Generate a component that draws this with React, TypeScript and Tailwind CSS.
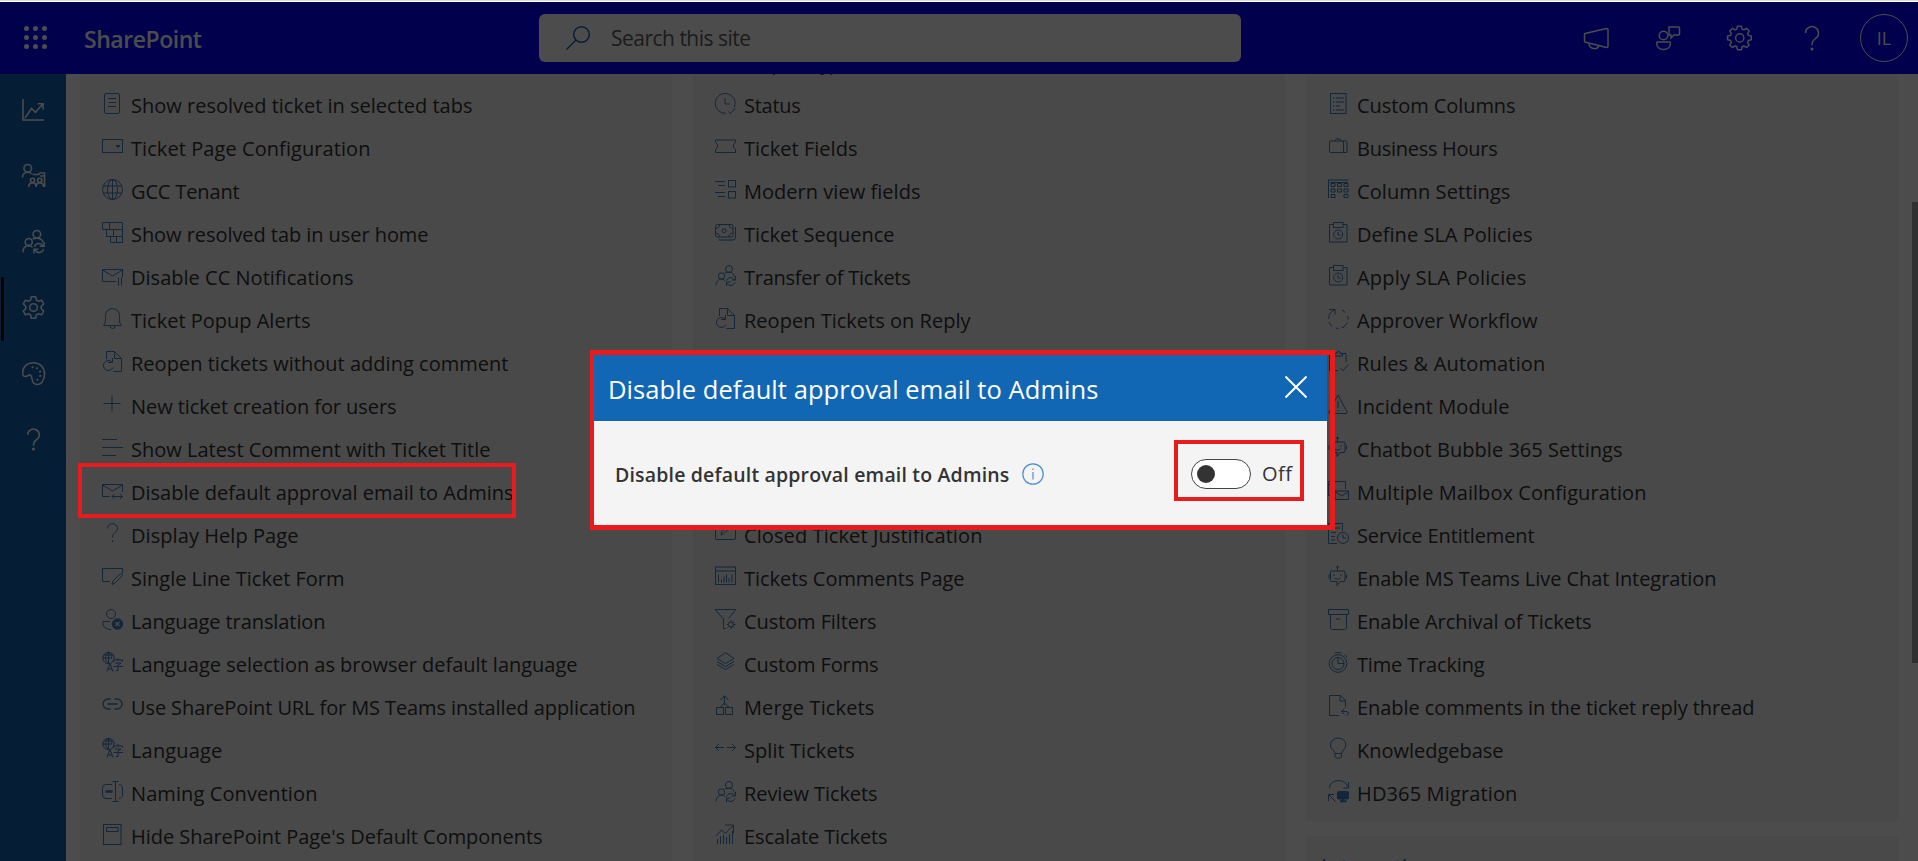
import { useLayoutEffect, useRef, useState, type ReactNode } from "react";

const icons: Record<string, ReactNode> = {
  doc: <><rect x="2.5" y=".5" width="15" height="20" rx="1.5" /><path d="M6 5.5h8M7 9.5h7M6 13.5h8" /></>,
  dropdown: <><rect x=".5" y="3.5" width="20" height="13" /><path d="M14 9.5h4l-2 2z" fill="currentColor" /></>,
  globe: <><circle cx="10.5" cy="10.5" r="10" /><ellipse cx="10.5" cy="10.5" rx="5" ry="10" /><path d="M10.5.5v20M1.3 7h18.4M1.3 14h18.4" /></>,
  tree: <><path d="M.5.5h20v20h-12v-6h-4v-7h-4z" /><path d="M4.5 7.5h16M8.5 14.5h12M7.5.5v7M11.5 7.5v7M14.5 14.5v6" /></>,
  mailPause: <><path d="M14 16.5H.5v-12h20V12M.5 5l10 6L20.500 5M16.500 12.500v8M19.500 12.500v8" /></>,
  bell: <><path d="M1.500 17.500c2-2 2-4 2-10a7 7 0 0 1 14 0c0 6 0 8 2 10zM8 18a2.500 2.500 0 0 0 5 0" /></>,
  reopen: <><path d="M4.500 8V.500h8l7 7v13h-8M12.500.500v7h7" /><path d="M10 11a5 5 0 1 0 1 5.500M10.500 7v4.500H6" /></>,
  plus: <path d="M10 1.500v16M1.500 9.500h17" />,
  lines: <path d="M0 2.500h15M0 10.500h21M0 18.500h14" />,
  mailArrows: <><path d="M7.500 16.500H.500v-12h20V12M.500 5l10 6L20.500 5M10 16.500h10.500M12.500 14L10 16.500l2.500 2.500M18 14l2.500 2.500L18 19" /></>,
  help: <><path d="M5.500 5.500a5 4.800 0 1 1 7.800 4c-2 1.400-2.800 2.500-2.800 5" /><circle cx="10.500" cy="18" r=".5" fill="currentColor" /></>,
  formPencil: <><path d="M8 15.500H.500v-13h20v5M11 15l7.500-7.500 2 2L13 17l-3 1.500z" /></>,
  personX: <><circle cx="9" cy="5" r="4.500" /><path d="M8 12.500H1c-1 5 3 8 8 8" /><circle cx="15.500" cy="15" r="5.200" fill="currentColor" /><path d="M13.500 13l4 4M17.500 13l-4 4" className="stroke-[#f4f4f4]" strokeWidth="1.4" /></>,
  lang: <><circle cx="6.500" cy="6" r="5.700" /><path d="M.8 6h9M6.500.300v11M2 3h9M6.500.300c-4 3-4 8 0 11M6.500.300c3 2 3.500 4 3.200 6M5 19.500l3-8 3 8M6 17h4" /><path d="M11.500 10V8h9v2M16 6v2M13 11h6l-3 2v5.500h-2M11.500 14.500h9.500" /></>,
  link: <path d="M8.500 4h-2.500a5 5 0 0 0 0 10h2.500M12.500 4H15a5 5 0 0 1 0 10h-2.500M5.500 9h10" strokeWidth="1.300" />,
  rename: <><path d="M10 3.500H4A3.500 3.500 0 0 0 .500 7v7A3.500 3.500 0 0 0 4 17.500h6M17 3.500c2 0 3.500 1.500 3.500 3.500v7c0 2-1.500 3.500-3.500 3.500M13.500.500v20M10.500.500h6M10.500 20.500h6" /><path d="M3.500 10.500h7" strokeWidth="2.500" /></>,
  template: <><rect x="1.500" y=".5" width="17.500" height="20" /><rect x="4.500" y="3.500" width="11.500" height="4" /></>,
  status: <><path d="M11 20.300A10 10 0 1 1 19.500 14M10 5v6h4.500M13.500 18.500l2 2 5-5.500" /></>,
  ticket: <path d="M.500 6.500V4h20v2.500a4 4 0 0 0 0 7V16.500H.500v-3a4 4 0 0 0 0-7z" />,
  fields: <><path d="M0 2.500h10M3 6.500h7M0 13.500h10M3 17.500h7" /><rect x="13.500" y="1.500" width="7" height="6.500" /><rect x="13.500" y="12.500" width="7" height="6.500" /></>,
  money: <><rect x=".5" y="2.500" width="17.500" height="12.500" rx="2" /><circle cx="9.200" cy="8.700" r="2" /><path d="M.500 6.500C3 6.500 4.500 5 4.500 2.500M14 2.500c0 2.500 1.500 4 4 4M.500 11c2.500 0 4 1.500 4 4M14 15c0-2.500 1.500-4 4-4M20.500 5v10a3 3 0 0 1-3 3H3.500" /></>,
  transfer: <><circle cx="14" cy="4" r="3.500" /><circle cx="6.500" cy="11" r="3.200" /><path d="M1 20.500c0-4 2.500-6.300 5.500-6.300 1.500 0 2.800.500 3.700 1.400M10 8c1-.500 2.500-.800 4-.800 3 0 5 2 5.500 4.500M11.500 15.500a4.500 4.500 0 0 1 8-1M20.500 11v4h-4M20 17.500a4.500 4.500 0 0 1-8 1M11.500 21v-4h4" /></>,
  edit: <><rect x=".5" y=".5" width="20" height="16" rx="1.500" /><path d="M6 12l1-3.500 7-7 2 2-7 7z" /></>,
  report: <><rect x=".5" y="1" width="20" height="17.500" /><path d="M.500 5h20M3.500 8.500v8M6.500 13.500v3M9 10.500v6M11.500 8.500v8M14 12v4.500M17 8.500v8" /></>,
  filter: <><path d="M8.500 19.500V10L.500 1V.500h20V1l-7 8.500M8.500 19.500h2.500" /><circle cx="16" cy="15.500" r="2.500" /><path d="M16 11v2M16 18v2M11.800 15.500h1.700M18.500 15.500h2M13 12.500l1.300 1.300M17.700 17.200l1.300 1.300M19 12.500l-1.300 1.300M14.300 17.200L13 18.500" /></>,
  layers: <><path d="M10.500.700L19 6.500l-8.500 5L2 6.500zM2 9.500l8.500 5 8.500-5M2 12.500l8.500 5 8.500-5" /></>,
  merge: <><path d="M9.500 10V.800M5.500 5l4-4.200 4 4.200M9.500 8l-4 4M9.500 8l4 4" /><rect x="1.500" y="12.500" width="7" height="7" /><rect x="10.500" y="12.500" width="7" height="7" /></>,
  split: <path d="M.500 9.500H9M4 6L.500 9.500 4 13M12 9.500h8.500M17 6l3.500 3.500L17 13" />,
  escalate: <path d="M1 12l5.500-6 4 3.500L18 1.500M10 1h8.500v8M2.500 15v5M5.500 12v8M8.500 11v9M11.500 13v7M14.500 10v10M17.500 7v13" />,
  list: <><rect x="2.500" y=".5" width="15.500" height="20" /><path d="M5 5h1.500M8 5h8M5 9h1.500M8 9h8M5 13h1.500M8 13h4M5 17h1.500M8 17h8" /></>,
  bag: <><rect x="1.500" y="5" width="17.500" height="11.500" rx="1" /><path d="M6.500 5c0-3 7-3 7 0M15.500 5v11.500" /></>,
  columns: <><path d="M.500 19V1h20M2 3.500h18" /><path d="M3 4.500h4v3H3zM9.500 4.500h4v3h-4zM16 4.500h4v3h-4zM3 10h4v3H3zM9.500 10h4v3h-4zM16 10h4v3h-4zM3 15.500h4v3H3zM16 15.500h4v3h-4z" /></>,
  sla: <><path d="M5 2.500H1.500v17.500h17.500V2.500H15" /><rect x="5.500" y=".5" width="9.500" height="5" /><circle cx="10.200" cy="12.500" r="4.500" /><path d="M10 10v3h2.500" /></>,
  cycle: <path d="M1 1.500h6v5M7 1.500A10 10 0 0 0 .700 11M1 14a10 10 0 0 0 3 4.500M8 20.300h3M13.500 18.500l1.500 1.500 4.500-5.500M20 11.500c0-1.500 0-2-.500-3.500M17.500 4.500L14 2" />,
  rules: <path d="M10 19.500H1.500V2.500H7M13 2.500h5V11M6.500 5V2.500h2a2 2 0 0 1 4 0h2V5zM12.500 17l2.500 2.500 5.500-6" />,
  warning: <><path d="M10 1L1 18c-.300 1 0 1.500 1 1.500h16c1 0 1.500-.500 1-1.500zM10 7v7M10 16v1.500" /></>,
  bot: <><path d="M3.500 5h12.500a1 1 0 0 1 1 1v8.500a1 1 0 0 1-1 1h-4L9 19.500v-4H3.500a1 1 0 0 1-1-1V6a1 1 0 0 1 1-1zM9.500 1v4M1 8.500v4M18.500 8.500v4M6 8.500v1.500M13 8.500v1.500M6.500 12c1.500 1.500 4.500 1.500 6 0" /><circle cx="9.500" cy="1" r=".8" fill="currentColor" /></>,
  mailbox: <><path d="M5 15.500H.500v-14h17V9M.500 5L8 1.500" /><rect x="7" y="11" width="13.500" height="8.500" /><path d="M7 11.500l6.700 4.500 6.800-4.500" /></>,
  entitlement: <><path d="M9 20.500H.500V.500h14V8M3 5h9M3 9.500h5M3 13.500h4M3 17h4" /><circle cx="15" cy="15" r="5.500" /><path d="M15 11.500V15h3" /></>,
  archive: <><path d="M.500.500h20v5H.500zM2.500 5.500V18c0 1.500.500 2.500 2 2.500h12c1.500 0 2-1 2-2.500V5.500M8 10h4.500" /></>,
  timer: <><circle cx="10" cy="11.500" r="8.800" /><circle cx="10" cy="11.500" r="6" /><path d="M7 .700h6.500M16.500 3l2.500 2M10 5.500v6h6" /></>,
  reply: <><path d="M11 20.500H1.500V.500h11l5 5V12M12 .500V6h6M13.500 16.500h4.500c3 0 3 4 .500 4M16.500 13.500l-3 3 3 3" /></>,
  bulb: <path d="M7 15.500c-1-4-4.500-4.500-4.500-8.500a7.700 7 0 0 1 15.400 0c0 4-3.400 4.500-4.400 8.500zM7 15.500v2.500c0 3 6.500 3 6.500 0v-2.500" />,
  migrate: <><path d="M1 7a10 10 0 0 1 19-1M20.500 1v6h-5M.500 20v-6.500H6M1 14l6.500 6.500" /><rect x="9.500" y="10.500" width="11" height="7.500" rx="1" fill="currentColor" /><path d="M12 20.300h6.500M15 18v2" strokeWidth="2" /></>,
};

const col1: [string, string, number][] = [
  ["doc", "Show resolved ticket in selected tabs", 340],
  ["dropdown", "Ticket Page Configuration", 238],
  ["globe", "GCC Tenant", 107],
  ["tree", "Show resolved tab in user home", 296],
  ["mailPause", "Disable CC Notifications", 221],
  ["bell", "Ticket Popup Alerts", 178],
  ["reopen", "Reopen tickets without adding comment", 376],
  ["plus", "New ticket creation for users", 264],
  ["lines", "Show Latest Comment with Ticket Title", 358],
  ["mailArrows", "Disable default approval email to Admins", 381],
  ["help", "Display Help Page", 166],
  ["formPencil", "Single Line Ticket Form", 212],
  ["personX", "Language translation", 193],
  ["lang", "Language selection as browser default language", 445],
  ["link", "Use SharePoint URL for MS Teams installed application", 503],
  ["lang", "Language", 90],
  ["rename", "Naming Convention", 185],
  ["template", "Hide SharePoint Page's Default Components", 410],
];

const col2: [string, string, number][] = [
  ["", "Request Type", 103],
  ["status", "Status", 55],
  ["ticket", "Ticket Fields", 112],
  ["fields", "Modern view fields", 175],
  ["money", "Ticket Sequence", 149],
  ["transfer", "Transfer of Tickets", 165],
  ["reopen", "Reopen Tickets on Reply", 225],
  ["", "", 0],
  ["", "", 0],
  ["", "", 0],
  ["", "", 0],
  ["edit", "Closed Ticket Justification", 237],
  ["report", "Tickets Comments Page", 219],
  ["filter", "Custom Filters", 131],
  ["layers", "Custom Forms", 133],
  ["merge", "Merge Tickets", 129],
  ["split", "Split Tickets", 109],
  ["transfer", "Review Tickets", 132],
  ["escalate", "Escalate Tickets", 142],
];

const col3: [string, string, number][] = [
  ["list", "Custom Columns", 157],
  ["bag", "Business Hours", 139],
  ["columns", "Column Settings", 152],
  ["sla", "Define SLA Policies", 174],
  ["sla", "Apply SLA Policies", 168],
  ["cycle", "Approver Workflow", 179],
  ["rules", "Rules & Automation", 187],
  ["warning", "Incident Module", 151],
  ["bot", "Chatbot Bubble 365 Settings", 264],
  ["mailbox", "Multiple Mailbox Configuration", 288],
  ["entitlement", "Service Entitlement", 176],
  ["bot", "Enable MS Teams Live Chat Integration", 358],
  ["archive", "Enable Archival of Tickets", 233],
  ["timer", "Time Tracking", 126],
  ["reply", "Enable comments in the ticket reply thread", 396],
  ["bulb", "Knowledgebase", 145],
  ["migrate", "HD365 Migration", 159],
];

/* Spreads a label's letters so that it takes up the given width. */
function FitText({ text, width, className = "" }: { text: string; width: number; className?: string }) {
  const ref = useRef<HTMLSpanElement>(null);
  const [spacing, setSpacing] = useState(0);
  useLayoutEffect(() => {
    if (!ref.current || !text) return;
    const natural = ref.current.getBoundingClientRect().width - spacing * text.length;
    setSpacing((width + 1.5 - natural) / text.length);
  }, [text, width]);
  return (
    <span ref={ref} className={`whitespace-nowrap ${className}`} style={{ letterSpacing: spacing }}>
      {text}
    </span>
  );
}

function Icon({ name, className = "size-[21px]" }: { name: string; className?: string }) {
  return (
    <svg viewBox="0 0 21 21" fill="none" stroke="currentColor" strokeWidth="1" className={`shrink-0 overflow-visible ${className}`}>
      {icons[name]}
    </svg>
  );
}

function Items({ items }: { items: [string, string, number][] }) {
  return (
    <ul>
      {items.map(([icon, text, width], i) => (
        <li key={i} className="flex h-[43px] items-center gap-2 leading-[41px]">
          <Icon name={icon} className="mb-[2px] size-[21px] text-[#1267b4] opacity-80" />
          <FitText text={text} width={width} className="pt-[2px] text-[20px] text-[#333]" />
        </li>
      ))}
    </ul>
  );
}

const gearPath =
  "M10 1h4l.7 3 1.900.800L19.200 3.200l2.700 2.700-1.600 2.600.8 1.900 3 .7v3.800l-3 .7-.8 1.900 1.600 2.600-2.700 2.700-2.600-1.600-1.900.8-.7 3h-4l-.7-3-1.900-.8-2.600 1.600-2.700-2.700 1.600-2.600-.8-1.900-3-.7v-3.800l3-.7.8-1.900L2.100 5.900l2.700-2.700 2.600 1.600L9.300 4z";

function SideIcon({ children, active = false }: { children: ReactNode; active?: boolean }) {
  return (
    <div className="flex h-[66px] items-center">
      <div className={active ? "ml-px mt-[3px] h-16 w-[3px] rounded-sm bg-black" : "ml-px h-16 w-[3px]"} />
      <svg viewBox="0 0 24 24" fill="none" stroke="currentColor" strokeWidth="1.600" className="ml-[18px] size-[23px] overflow-visible text-white">
        {children}
      </svg>
    </div>
  );
}

function TopIcon({ children }: { children: ReactNode }) {
  return (
    <svg viewBox="0 0 24 24" fill="none" stroke="currentColor" strokeWidth="1.500" className="size-6 overflow-visible">
      {children}
    </svg>
  );
}

const question = (
  <>
    <path d="M5.500 7a6.500 6.500 0 1 1 10 5.500C13 14.200 12 15.500 12 19" />
    <circle cx="12" cy="23" r=".8" fill="currentColor" />
  </>
);

export default function App() {
  return (
    <div className="relative flex h-[861px] w-[1918px] flex-col overflow-hidden bg-white font-['Open_Sans','Noto_Sans',sans-serif]">
      <div className="h-[2px] shrink-0 border-t border-[#dddbe8] bg-white" />
      <header className="flex h-[72px] shrink-0 items-center bg-[#0000ff] text-white">
        <div className="ml-6 mb-[-2px] grid w-[23px] -translate-y-[2px] grid-cols-3 gap-x-1 gap-y-1">
          {Array.from({ length: 9 }, (_, i) => (
            <span key={i} className="size-[5px] rounded-full bg-white" />
          ))}
        </div>
        <div className="ml-[37px] w-[455px] pt-[2px]">
          <FitText text="SharePoint" width={116} className="text-[23px] font-semibold" />
        </div>
        <div className="flex h-12 w-[702px] items-center rounded-md bg-white pl-[27px]">
          <svg viewBox="0 0 24 24" fill="none" stroke="currentColor" strokeWidth="1.500" className="size-6 overflow-visible text-[#1267b4]">
            <circle cx="15.500" cy="8.500" r="7.800" />
            <path d="M10 14L.500 23.500" />
          </svg>
          <div className="ml-[21px] pt-[2px]">
            <FitText text="Search this site" width={138} className="text-[21px] text-[#605e5c]" />
          </div>
        </div>
        <div className="ml-[343px] flex items-center gap-12">
          <TopIcon>
            <path d="M1 7.500L22.500 2.500c1 0 1.500.300 1.500 1v17c0 .700-.500 1-1.500 1L1 16c-.500-.300-.500-.500-.500-1V8.500c0-.500 0-.800.500-1zM5 17c0 6.500 8.500 7.500 10 2.300" />
          </TopIcon>
          <TopIcon>
            <circle cx="7.500" cy="9.500" r="4.300" />
            <path d="M1.500 16h12a1 1 0 0 1 1 1c0 4-3 6.500-7 6.500S.700 21 .700 17a1 1 0 0 1 .8-1zM13 1h9.500a1 1 0 0 1 1 1v6a1 1 0 0 1-1 1H18l-3 3V9h-2z" />
          </TopIcon>
          <TopIcon>
            <g transform="translate(-.300 -.800) scale(.98)">
              <path d={gearPath} strokeLinejoin="round" />
              <circle cx="12.300" cy="13" r="4.200" />
            </g>
          </TopIcon>
          <TopIcon>{question}</TopIcon>
        </div>
        <div className="ml-[36px] flex size-12 items-center justify-center rounded-full border border-white text-[18px]">
          IL
        </div>
      </header>

      <div className="flex min-h-0 flex-1">
        <nav className="w-[66px] shrink-0 bg-[#1267b4] pt-[2px]">
          <SideIcon>
            <path d="M1 1v22h22M3 21l7-10 4 4 8-9M16.500 6H22v6" />
          </SideIcon>
          <SideIcon>
            <circle cx="6" cy="4.500" r="4" />
            <path d="M.500 14c0-3.500 2.500-5.500 5.500-5.500 2 0 3 .500 4 1.500M11 11h6l2-1.500h4.500V24M23.500 12.500H19" />
            <circle cx="11" cy="17" r="2.200" />
            <circle cx="18.500" cy="17" r="2.200" />
            <path d="M7 24c0-3 1.500-4.500 4-4.500s3.800 1.500 3.800 4.500c0-3 1.200-4.500 3.700-4.500s4 1.500 4 4.500" />
          </SideIcon>
          <SideIcon>
            <circle cx="15.500" cy="4.500" r="4" />
            <circle cx="7" cy="12.500" r="3.700" />
            <path d="M1 23.500c0-4.500 2.500-7 6-7 1.500 0 3 .500 4 1.500M11 9.500c1-.700 2.500-1 4.500-1 3.500 0 6 2 6.500 4.500M13 17.500a5 5 0 0 1 9-1M23 12.500v4.500h-4.500M22.500 20a5 5 0 0 1-9 1M12.500 24.500V20H17" />
          </SideIcon>
          <SideIcon active>
            <path strokeLinejoin="round" d="M9.800.800h4.400l.8 3.400 2 1.200 3.400-1 2.200 3.900-2.500 2.400v2.600l2.500 2.400-2.200 3.900-3.400-1-2 1.200-.8 3.400H9.800L9 19.800l-2-1.200-3.400 1-2.200-3.900 2.500-2.400v-2.600L1.400 8.300l2.200-3.900 3.400 1 2-1.200z" />
            <circle cx="12" cy="12" r="4" />
          </SideIcon>
          <SideIcon>
            <path d="M1 13.500C-.500 6 5 .700 12 .700S23.500 6 23.500 12.500 20 23.500 16 23.500c-3 0-5-2-5.500-5.500-.500-4-2-5.500-4-4-1.500 1.200-4.500 2-5.500-.500z" />
            <path d="M11 5.500h.1M15.500 6.500h.1M18.800 10h.1M19 14.500h.1M16 18.500h.1" strokeWidth="2.200" strokeLinecap="round" />
          </SideIcon>
          <SideIcon>
            <path d="M6 7a6 6 0 1 1 9.500 5C13 13.700 12 15 12 18.500" />
            <circle cx="12" cy="22" r=".8" fill="currentColor" />
          </SideIcon>
        </nav>

        <main className="flex min-w-0 flex-1 gap-[21px] overflow-hidden bg-white pl-[14px]">
          <section className="w-[592px] shrink-0 bg-[#f3f3f3] pl-[22px] pt-[9px]">
            <Items items={col1} />
          </section>
          <section className="w-[592px] shrink-0 bg-[#f3f3f3] pl-[22px]">
            <div className="-mt-[34px]">
              <Items items={col2} />
            </div>
          </section>
          <div className="flex w-[592px] shrink-0 flex-col gap-[15px]">
            <section className="h-[747px] shrink-0 bg-[#f3f3f3] pl-[22px] pt-[9px]">
              <Items items={col3} />
            </section>
            <section className="h-[120px] shrink-0 bg-[#f3f3f3] pl-[15px] pt-[14px]">
              <h2 className="text-[22px] text-[#1267b4]">Integrations</h2>
            </section>
          </div>
          <div className="-ml-[7px] mt-[128px] h-[461px] w-[6px] shrink-0 bg-[#a0a0a0]" />
        </main>
      </div>

      <div className="absolute inset-x-0 bottom-0 top-[2px] bg-black/70" />

      <div className="absolute left-[78px] top-[463px] h-[55px] w-[438px] border-4 border-[#e81c1c]" />

      <div role="dialog" className="absolute left-[590px] top-[350px] h-[180px] w-[745px] border-y-5 border-l-4 border-r-5 border-[#e81c1c] pr-[3px]">
        <div className="flex h-full flex-col bg-[#f4f4f4]">
          <div className="flex h-[66px] shrink-0 items-center justify-between bg-[#1267b4] pl-[14px] pr-5 text-white">
            <FitText text="Disable default approval email to Admins" width={489} className="pt-[3px] text-[25.500px]" />
            <svg viewBox="0 0 22 22" stroke="currentColor" strokeWidth="2" className="mb-[2px] size-[22px]">
              <path d="M.500.500l21 21M21.500.500l-21 21" />
            </svg>
          </div>
          <div className="flex flex-1 items-center pl-[21px] pt-px text-[#333]">
            <FitText text="Disable default approval email to Admins" width={393} className="pt-[2px] text-[19.500px] font-semibold" />
            <svg viewBox="0 0 22 22" fill="none" stroke="currentColor" strokeWidth="1.200" className="ml-[12.500px] size-[22px] text-[#4a8fd0]">
              <circle cx="11" cy="11" r="10.200" />
              <path d="M11 9v7.500M11 5.500v1.500" />
            </svg>
            <div className="-mt-[7px] ml-[130px] flex h-[61px] w-[130px] items-center border-4 border-[#e81c1c] pl-[13px]">
              <div className="mt-[7px] flex h-[30px] w-[60px] shrink-0 items-center rounded-full border border-[#444] bg-white pl-[5px]">
                <div className="size-[18px] rounded-full bg-[#333]" />
              </div>
              <FitText text="Off" width={29} className="ml-[11px] pt-[7px] text-[20px]" />
            </div>
          </div>
        </div>
      </div>
    </div>
  );
}
